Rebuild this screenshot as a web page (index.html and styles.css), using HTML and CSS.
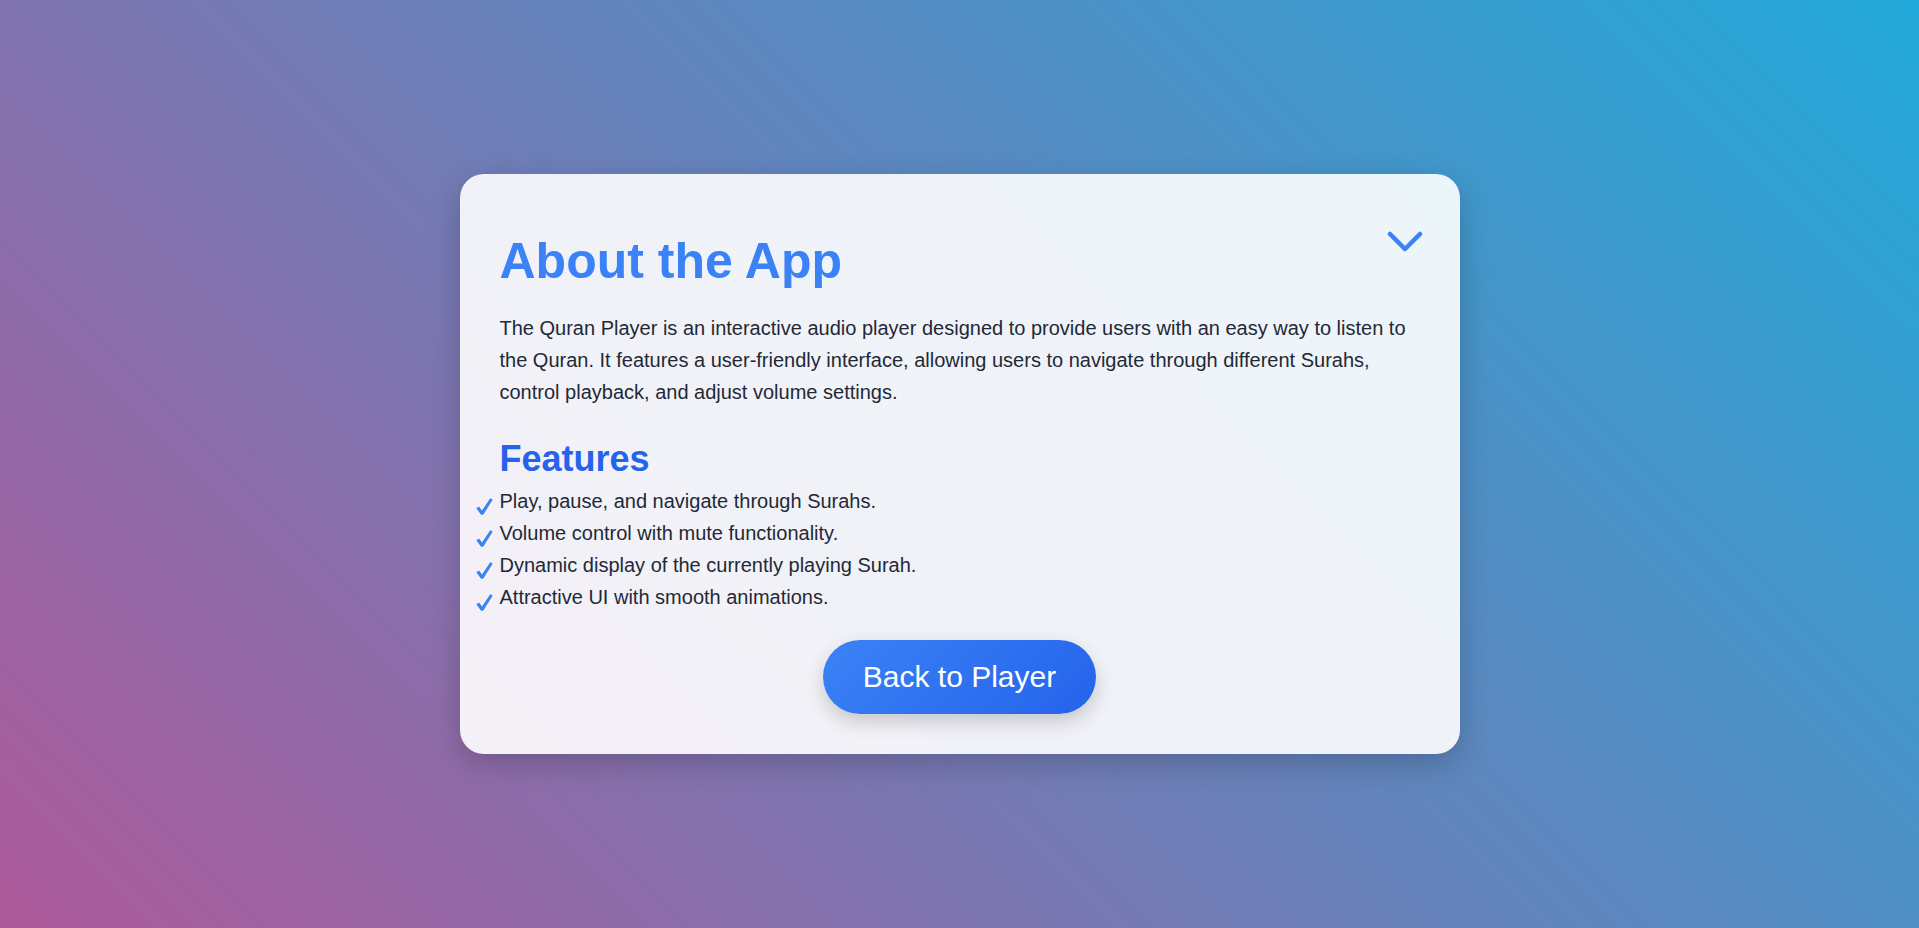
FILE: index.html
```html
<!DOCTYPE html>
<html lang="en">
<head>
  <meta charset="UTF-8" />
  <title>About the App</title>
  <meta name="viewport" content="width=device-width, initial-scale=1.0">
  <link rel="stylesheet" href="styles.css">
</head>
<body>
  <div class="about-card">
    <button class="toggle-btn" aria-label="Collapse">
      <svg width="36" height="24" viewBox="0 0 36 24">
        <polyline points="3,4 18,19 33,4" fill="none" stroke="#3b82f6" stroke-width="4.5" stroke-linecap="round" stroke-linejoin="round" />
      </svg>
    </button>

    <h1>About the App</h1>
    <p>The Quran Player is an interactive audio player designed to provide users with an easy way to listen to the Quran. It features a user-friendly interface, allowing users to navigate through different Surahs, control playback, and adjust volume settings.</p>

    <h2>Features</h2>
    <ul class="features">
      <li>Play, pause, and navigate through Surahs.</li>
      <li>Volume control with mute functionality.</li>
      <li>Dynamic display of the currently playing Surah.</li>
      <li>Attractive UI with smooth animations.</li>
    </ul>

    <div class="actions">
      <button class="back-btn">Back to Player</button>
    </div>
  </div>
</body>
</html>
```

FILE: styles.css
```css
* {
  box-sizing: border-box;
}

body {
  margin: 0;
  min-height: 100vh;
  font-family: "Liberation Sans", Arial, sans-serif;
  background: linear-gradient(45deg, #ae5a9b, #21a9d9);
  color: #1f2937;
  display: flex;
  align-items: center;
  justify-content: center;
}

.about-card {
  position: relative;
  width: 1000px;
  padding: 40px;
  background: rgba(255, 255, 255, 0.9);
  border-radius: 24px;
  box-shadow: 0 10px 30px rgba(0, 0, 0, 0.2);
}

.toggle-btn {
  position: absolute;
  top: 56px;
  right: 37px;
  padding: 0;
  border: none;
  background: none;
  cursor: pointer;
  line-height: 0;
}

h1 {
  margin: 18px 0 22px;
  font-size: 50px;
  color: #3b82f6;
}

p {
  margin: 0;
  font-size: 20px;
  line-height: 1.6;
}

h2 {
  margin: 30px 0 5px;
  font-size: 36px;
  color: #2563eb;
}

.features {
  list-style: none;
  margin: 0;
  padding: 0;
}

.features li {
  position: relative;
  font-size: 20px;
  line-height: 1.6;
}

/* check mark drawn as a small svg so the stroke weight matches */
.features li::before {
  content: "";
  position: absolute;
  left: -24px;
  top: 13px;
  width: 17px;
  height: 17px;
  background: url("data:image/svg+xml,%3Csvg xmlns='http://www.w3.org/2000/svg' viewBox='0 0 17 17'%3E%3Cpath d='M0.3 10.2 L3 8.6 L6 12.6 L14.2 0.3 L16.8 1.6 L7.2 16.8 L5 16.8 Z' fill='%233b82f6'/%3E%3C/svg%3E") no-repeat center / contain;
}

.actions {
  margin-top: 27px;
  text-align: center;
}

.back-btn {
  padding: 20px 40px;
  border: none;
  border-radius: 40px;
  background: linear-gradient(135deg, #3b82f6, #2563eb);
  color: #fff;
  font-family: inherit;
  font-size: 30px;
  box-shadow: 0 8px 20px rgba(0, 0, 0, 0.18);
  cursor: pointer;
}
```
